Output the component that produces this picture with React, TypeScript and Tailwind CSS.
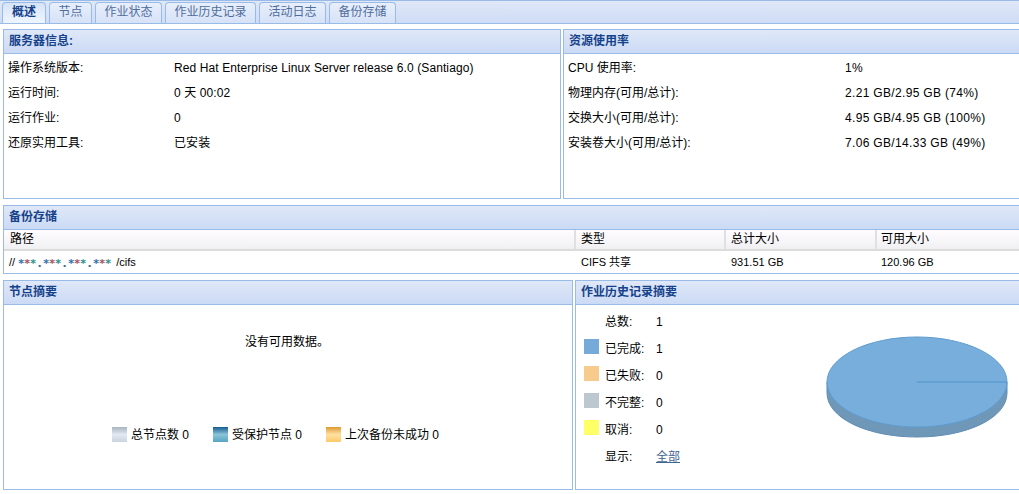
import React from 'react';

const FONT = "font-['Liberation_Sans','Noto_Sans_CJK_SC',sans-serif]";

const TABS = ['概述', '节点', '作业状态', '作业历史记录', '活动日志', '备份存储'];
const TAB_WIDTHS = ['w-[44px]', 'w-[43px]', 'w-[67px]', 'w-[91px]', 'w-[67px]', 'w-[67px]'];

const SERVER_INFO = [
  ['操作系统版本:', 'Red Hat Enterprise Linux Server release 6.0 (Santiago)'],
  ['运行时间:', '0 天 00:02'],
  ['运行作业:', '0'],
  ['还原实用工具:', '已安装']
];

const RESOURCES = [
  ['CPU 使用率:', '1%'],
  ['物理内存(可用/总计):', '2.21 GB/2.95 GB (74%)'],
  ['交换大小(可用/总计):', '4.95 GB/4.95 GB (100%)'],
  ['安装卷大小(可用/总计):', '7.06 GB/14.33 GB (49%)']
];

const JOBS = [
  { label: '总数:', value: '1' },
  { label: '已完成:', value: '1', swatch: 'bg-[#76abd9]' },
  { label: '已失败:', value: '0', swatch: 'bg-[#f7cb8e]' },
  { label: '不完整:', value: '0', swatch: 'bg-[#bcc7cf]' },
  { label: '取消:', value: '0', swatch: 'bg-[#ffff66]' }
];

function Panel({
  title,
  className,
  children
}: {
  title: string;
  className?: string;
  children?: React.ReactNode;
}) {
  return (
    <div className={`flex flex-col border border-[#99bbe8] bg-white ${className ?? ''}`}>
      <div className="h-[24px] shrink-0 border-b border-[#99bbe8] bg-gradient-to-b from-[#e0e8f8] to-[#cbdaf5] pl-[5px] text-[12px] leading-[23px] font-bold text-[#15428b]">
        {title}
      </div>
      {children}
    </div>
  );
}

function InfoRows({ rows, labelWidth, spacing }: { rows: string[][]; labelWidth: string; spacing: string }) {
  return (
    <div className="flex flex-col pt-[1px] pl-[4px]">
      {rows.map(([label, value]) => (
        <div key={label} className="flex h-[25px] items-center">
          <span className={`${labelWidth} shrink-0`}>{label}</span>
          <span className={spacing}>{value}</span>
        </div>
      ))}
    </div>
  );
}

function HeaderCell({ label, className }: { label: string; className: string }) {
  return (
    <div className={`${className} h-full shrink-0 border-r-2 border-[#e0e0e0] pl-[5px] leading-[18px]`}>{label}</div>
  );
}

function LegendItem({ label, swatch }: { label: string; swatch: string }) {
  return (
    <div className="flex items-center gap-[4px]">
      <span className={`mb-[2px] h-[15px] w-[15px] ${swatch}`} />
      <span>{label}</span>
    </div>
  );
}

function MaskedAddress() {
  return (
    <span className="mr-[5px] ml-[3px] flex items-center pt-[3px] font-['DejaVu_Sans',sans-serif] text-[11px] leading-[12px] font-bold">
      {[0, 1, 2, 3].map((i) => (
        <React.Fragment key={i}>
          {i > 0 && <span className="w-[7px] text-center text-[#3f6f8f]">.</span>}
          <span className="flex w-[18px] justify-between">
            <span className="text-[#2f6fb0]">*</span>
            <span className="text-[#a8505f]">*</span>
            <span className="text-[#2f8f8a]">*</span>
          </span>
        </React.Fragment>
      ))}
    </span>
  );
}

function Pie() {
  return (
    <svg width="182" height="102" viewBox="0 0 182 102" className="mt-[31px] ml-[50px] shrink-0">
      <path d="M1 46 V57 C1 82 41 101 91 101 C141 101 181 82 181 57 V46 Z" fill="#6f97b8" stroke="#5f8db5" />
      <ellipse cx="91" cy="46" rx="90" ry="45" fill="#78aedb" stroke="#5f9ccf" />
      <line x1="91" y1="46" x2="181" y2="46" stroke="#4f93cc" />
    </svg>
  );
}

export default function App() {
  return (
    <div className={`${FONT} flex h-[494px] w-[1019px] flex-col overflow-hidden bg-white text-[12px] text-black`}>
      <div className="flex h-[24px] shrink-0 items-end gap-[3px] border-y border-[#99bbe8] bg-gradient-to-b from-[#e0e8f8] to-[#cfdcf6] pl-[2px]">
        {TABS.map((tab, i) => (
          <div
            key={tab}
            className={`${TAB_WIDTHS[i]} h-[21px] rounded-t-[4px] border border-b-0 border-[#99bbe8] text-center leading-[19px] ${i === 0 ? 'bg-gradient-to-b from-[#d6e4f8] to-[#eef5ff] font-bold text-[#15428b]' : 'bg-gradient-to-b from-[#e8effb] to-[#d6e2f8] text-[#4f6d9c]'}`}
          >
            {tab}
          </div>
        ))}
      </div>

      <div className="mt-[5px] flex h-[170px] shrink-0 gap-[2px] pl-[3px]">
        <Panel title="服务器信息:" className="w-[558px] shrink-0">
          <InfoRows rows={SERVER_INFO} labelWidth="w-[166px]" spacing="tracking-[0.1px]" />
        </Panel>
        <Panel title="资源使用率" className="w-[470px] shrink-0">
          <InfoRows rows={RESOURCES} labelWidth="w-[277px]" spacing="tracking-[0.33px]" />
        </Panel>
      </div>

      <Panel title="备份存储" className="mt-[6px] ml-[3px] h-[69px] w-[1030px] shrink-0">
        <div className="flex h-[21px] shrink-0 border-b-2 border-[#dcdcdc] bg-gradient-to-b from-[#fffcff] to-[#f0f0f3] pl-[1px]">
          <HeaderCell label="路径" className="w-[571px]" />
          <HeaderCell label="类型" className="w-[150px]" />
          <HeaderCell label="总计大小" className="w-[151px]" />
          <div className="pl-[4px] leading-[18px]">可用大小</div>
        </div>
        <div className="flex flex-1 items-center pl-[5px] text-[11px]">
          <span className="flex w-[572px] shrink-0 items-center">
            <span>//</span>
            <MaskedAddress />
            <span>/cifs</span>
          </span>
          <span className="w-[150px] shrink-0">CIFS 共享</span>
          <span className="w-[150px] shrink-0">931.51 GB</span>
          <span>120.96 GB</span>
        </div>
      </Panel>

      <div className="mt-[6px] flex h-[210px] shrink-0 gap-[2px] pl-[3px]">
        <Panel title="节点摘要" className="w-[570px] shrink-0">
          <div className="flex flex-1 flex-col items-center">
            <p className="mt-[28px] mr-[2px]">没有可用数据。</p>
            <div className="mt-[75px] flex gap-[24px] self-start pl-[108px]">
              <LegendItem label="总节点数 0" swatch="bg-gradient-to-b from-[#a6b4c2] via-[#e2e9f2] to-[#c8d4de]" />
              <LegendItem label="受保护节点 0" swatch="bg-gradient-to-b from-[#0f5c93] via-[#8cc4d8] to-[#55a5c4]" />
              <LegendItem label="上次备份未成功 0" swatch="bg-gradient-to-b from-[#de9a2a] via-[#ffe0a0] to-[#fdc968]" />
            </div>
          </div>
        </Panel>
        <Panel title="作业历史记录摘要" className="w-[470px] shrink-0">
          <div className="flex flex-1">
            <div className="flex w-[200px] shrink-0 flex-col pt-[3px] pl-[8px]">
              {JOBS.map((job) => (
                <div key={job.label} className="flex h-[27px] items-center">
                  <span className={`mb-[4px] h-[15px] w-[15px] shrink-0 ${job.swatch ?? ''}`} />
                  <span className="ml-[6px] w-[51px] shrink-0">{job.label}</span>
                  <span>{job.value}</span>
                </div>
              ))}
              <div className="flex h-[27px] items-center">
                <span className="ml-[21px] w-[51px] shrink-0">显示:</span>
                <a className="text-[#3f6595] underline">全部</a>
              </div>
            </div>
            <Pie />
          </div>
        </Panel>
      </div>
    </div>
  );
}
